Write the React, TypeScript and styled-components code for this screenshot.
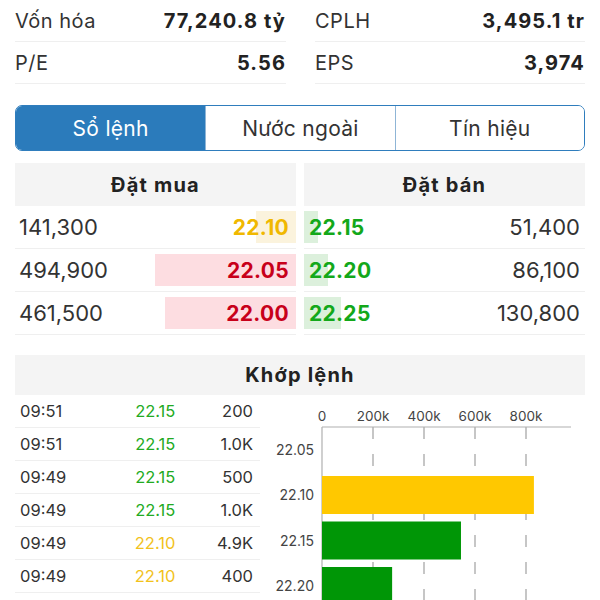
import React from "react";
import styled, { createGlobalStyle } from "styled-components";

const Global = createGlobalStyle`
  html, body { margin: 0; padding: 0; background: #fff; }
  body { font-family: Inter, "Noto Sans", "Liberation Sans", sans-serif; color: #333; }
`;

const Page = styled.div`
  width: 600px;
  height: 600px;
  overflow: hidden;
  padding: 0 15px;
  box-sizing: border-box;
`;

const InfoGrid = styled.div`
  display: grid;
  grid-template-columns: 271px 270px;
  column-gap: 29px;
`;

const InfoRow = styled.div`
  display: flex;
  justify-content: space-between;
  align-items: center;
  height: 41px;
  border-bottom: 1px solid #efefef;
  font-size: 20px;
`;

const InfoLabel = styled.span`
  color: #333;
  letter-spacing: 0.5px;
`;

const InfoValue = styled.span`
  font-weight: 700;
  color: #222;
  letter-spacing: 1.1px;
`;

const Tabs = styled.div`
  margin-top: 21px;
  display: grid;
  grid-template-columns: repeat(3, 1fr);
  height: 46px;
  border: 1.5px solid #2f7dbd;
  border-radius: 7px;
  overflow: hidden;
  box-sizing: border-box;
`;

const Tab = styled.div<{ $active?: boolean }>`
  display: flex;
  align-items: center;
  justify-content: center;
  font-size: 21px;
  letter-spacing: 0.3px;
  color: ${(p) => (p.$active ? "#fff" : "#333")};
  background: ${(p) => (p.$active ? "#2b7bbb" : "#fff")};
  & + & {
    border-left: 1px solid #8fb5d6;
  }
`;

const Book = styled.div`
  margin-top: 12px;
  display: grid;
  grid-template-columns: 281px 281px;
  column-gap: 8px;
`;

const Column = styled.div`
  display: flex;
  flex-direction: column;
`;

const Header = styled.div`
  height: 43px;
  background: #f4f4f4;
  display: flex;
  align-items: center;
  justify-content: center;
  font-size: 20px;
  font-weight: 700;
  letter-spacing: 1.2px;
  color: #222;
`;

const BookRow = styled.div<{ $side: "buy" | "sell" }>`
  position: relative;
  height: 42px;
  border-bottom: 1px solid #efefef;
  display: flex;
  align-items: center;
  justify-content: space-between;
  padding: ${(p) => (p.$side === "buy" ? "0 7px 0 4px" : "0 5px 0 5px")};
`;

const DepthBar = styled.div<{ $side: "buy" | "sell"; $tone: string }>`
  position: absolute;
  top: 5px;
  height: 32px;
  ${(p) => (p.$side === "buy" ? "right: 0;" : "left: 0;")}
  background: ${(p) => p.$tone};
`;

const Volume = styled.span`
  position: relative;
  font-size: 22px;
  color: #333;
`;

const Price = styled.span<{ $color: string }>`
  position: relative;
  font-size: 21px;
  font-weight: 700;
  letter-spacing: 0.3px;
  color: ${(p) => p.$color};
`;

const Match = styled.div`
  margin-top: 20px;
`;

const MatchHeader = styled(Header)`
  height: 40px;
`;

const MatchBody = styled.div`
  display: grid;
  grid-template-columns: 245px 1fr;
`;

const TradeList = styled.div`
  display: flex;
  flex-direction: column;
`;

const TradeRow = styled.div`
  display: grid;
  grid-template-columns: repeat(3, 1fr);
  align-items: center;
  height: 32px;
  border-bottom: 1px solid #efefef;
  padding: 0 7px 0 5px;
  font-size: 16.5px;
`;

const Time = styled.span`
  color: #333;
`;

const TradePrice = styled.span<{ $color: string }>`
  text-align: right;
  color: ${(p) => p.$color};
`;

const TradeVol = styled.span`
  text-align: right;
  color: #333;
`;

const ChartBox = styled.div`
  height: 210px;
`;

const YELLOW = "#f0b800";
const RED = "#c8001a";
const GREEN = "#13a81a";

const buys = [
  { vol: "141,300", price: "22.10", color: YELLOW, bar: 40, tone: "#fbf3dd" },
  { vol: "494,900", price: "22.05", color: RED, bar: 141, tone: "#fddde1" },
  { vol: "461,500", price: "22.00", color: RED, bar: 131, tone: "#fddde1" },
];

const sells = [
  { vol: "51,400", price: "22.15", bar: 14 },
  { vol: "86,100", price: "22.20", bar: 24 },
  { vol: "130,800", price: "22.25", bar: 37 },
];

const trades = [
  { t: "09:51", p: "22.15", v: "200", c: "#22aa22" },
  { t: "09:51", p: "22.15", v: "1.0K", c: "#22aa22" },
  { t: "09:49", p: "22.15", v: "500", c: "#22aa22" },
  { t: "09:49", p: "22.15", v: "1.0K", c: "#22aa22" },
  { t: "09:49", p: "22.10", v: "4.9K", c: "#f2c21c" },
  { t: "09:49", p: "22.10", v: "400", c: "#f2c21c" },
];

const Chart: React.FC = () => {
  // svg origin at page x=260, y=395
  const x0 = 62;
  const axisY = 32;
  const per200 = 51;
  const band = 45.5;
  const ticks = ["0", "200k", "400k", "600k", "800k"];
  const cats = [
    { label: "22.05", v: 0, color: "" },
    { label: "22.10", v: 831, color: "#ffc800" },
    { label: "22.15", v: 545, color: "#009606" },
    { label: "22.20", v: 275, color: "#009606" },
  ];
  return (
    <svg width="325" height="210" viewBox="0 0 325 210" style={{ display: "block" }}>
      {ticks.map((t, i) => (
        <text
          key={t}
          x={x0 + i * per200}
          y={26}
          textAnchor="middle"
          fontSize="13.5"
          fill="#444"
          fontFamily="Inter, 'Liberation Sans', sans-serif"
        >
          {t}
        </text>
      ))}
      {ticks.slice(1).map((t, i) => (
        <line
          key={t}
          x1={x0 + (i + 1) * per200}
          x2={x0 + (i + 1) * per200}
          y1={axisY}
          y2={210}
          stroke="#b4b4b4"
          strokeWidth="1.5"
          strokeDasharray="12 15"
        />
      ))}
      <line x1={x0} x2={311} y1={axisY} y2={axisY} stroke="#b0b0b0" strokeWidth="1.2" />
      <line x1={x0} x2={x0} y1={axisY} y2={210} stroke="#b0b0b0" strokeWidth="1.2" />
      {cats.map((c, i) => {
        const top = axisY + i * band;
        return (
          <g key={c.label}>
            <text
              x={54}
              y={top + band / 2 + 5}
              textAnchor="end"
              fontSize="14"
              fill="#444"
              fontFamily="Inter, 'Liberation Sans', sans-serif"
            >
              {c.label}
            </text>
            {c.v > 0 && (
              <rect
                x={x0}
                y={top + 3.5}
                width={(c.v / 200) * per200}
                height={38}
                fill={c.color}
              />
            )}
          </g>
        );
      })}
    </svg>
  );
};

export default function App() {
  return (
    <Page>
      <Global />
      <InfoGrid>
        <InfoRow>
          <InfoLabel>Vốn hóa</InfoLabel>
          <InfoValue>77,240.8 tỷ</InfoValue>
        </InfoRow>
        <InfoRow>
          <InfoLabel>CPLH</InfoLabel>
          <InfoValue>3,495.1 tr</InfoValue>
        </InfoRow>
        <InfoRow>
          <InfoLabel>P/E</InfoLabel>
          <InfoValue>5.56</InfoValue>
        </InfoRow>
        <InfoRow>
          <InfoLabel>EPS</InfoLabel>
          <InfoValue>3,974</InfoValue>
        </InfoRow>
      </InfoGrid>

      <Tabs>
        <Tab $active>Sổ lệnh</Tab>
        <Tab>Nước ngoài</Tab>
        <Tab>Tín hiệu</Tab>
      </Tabs>

      <Book>
        <Column>
          <Header>Đặt mua</Header>
          {buys.map((b) => (
            <BookRow key={b.price} $side="buy">
              <DepthBar $side="buy" $tone={b.tone} style={{ width: b.bar }} />
              <Volume>{b.vol}</Volume>
              <Price $color={b.color}>{b.price}</Price>
            </BookRow>
          ))}
        </Column>
        <Column>
          <Header>Đặt bán</Header>
          {sells.map((s) => (
            <BookRow key={s.price} $side="sell">
              <DepthBar $side="sell" $tone="#dcf0dc" style={{ width: s.bar }} />
              <Price $color={GREEN}>{s.price}</Price>
              <Volume>{s.vol}</Volume>
            </BookRow>
          ))}
        </Column>
      </Book>

      <Match>
        <MatchHeader>Khớp lệnh</MatchHeader>
        <MatchBody>
          <TradeList>
            {trades.map((t, i) => (
              <TradeRow key={i}>
                <Time>{t.t}</Time>
                <TradePrice $color={t.c}>{t.p}</TradePrice>
                <TradeVol>{t.v}</TradeVol>
              </TradeRow>
            ))}
          </TradeList>
          <ChartBox>
            <Chart />
          </ChartBox>
        </MatchBody>
      </Match>
    </Page>
  );
}
